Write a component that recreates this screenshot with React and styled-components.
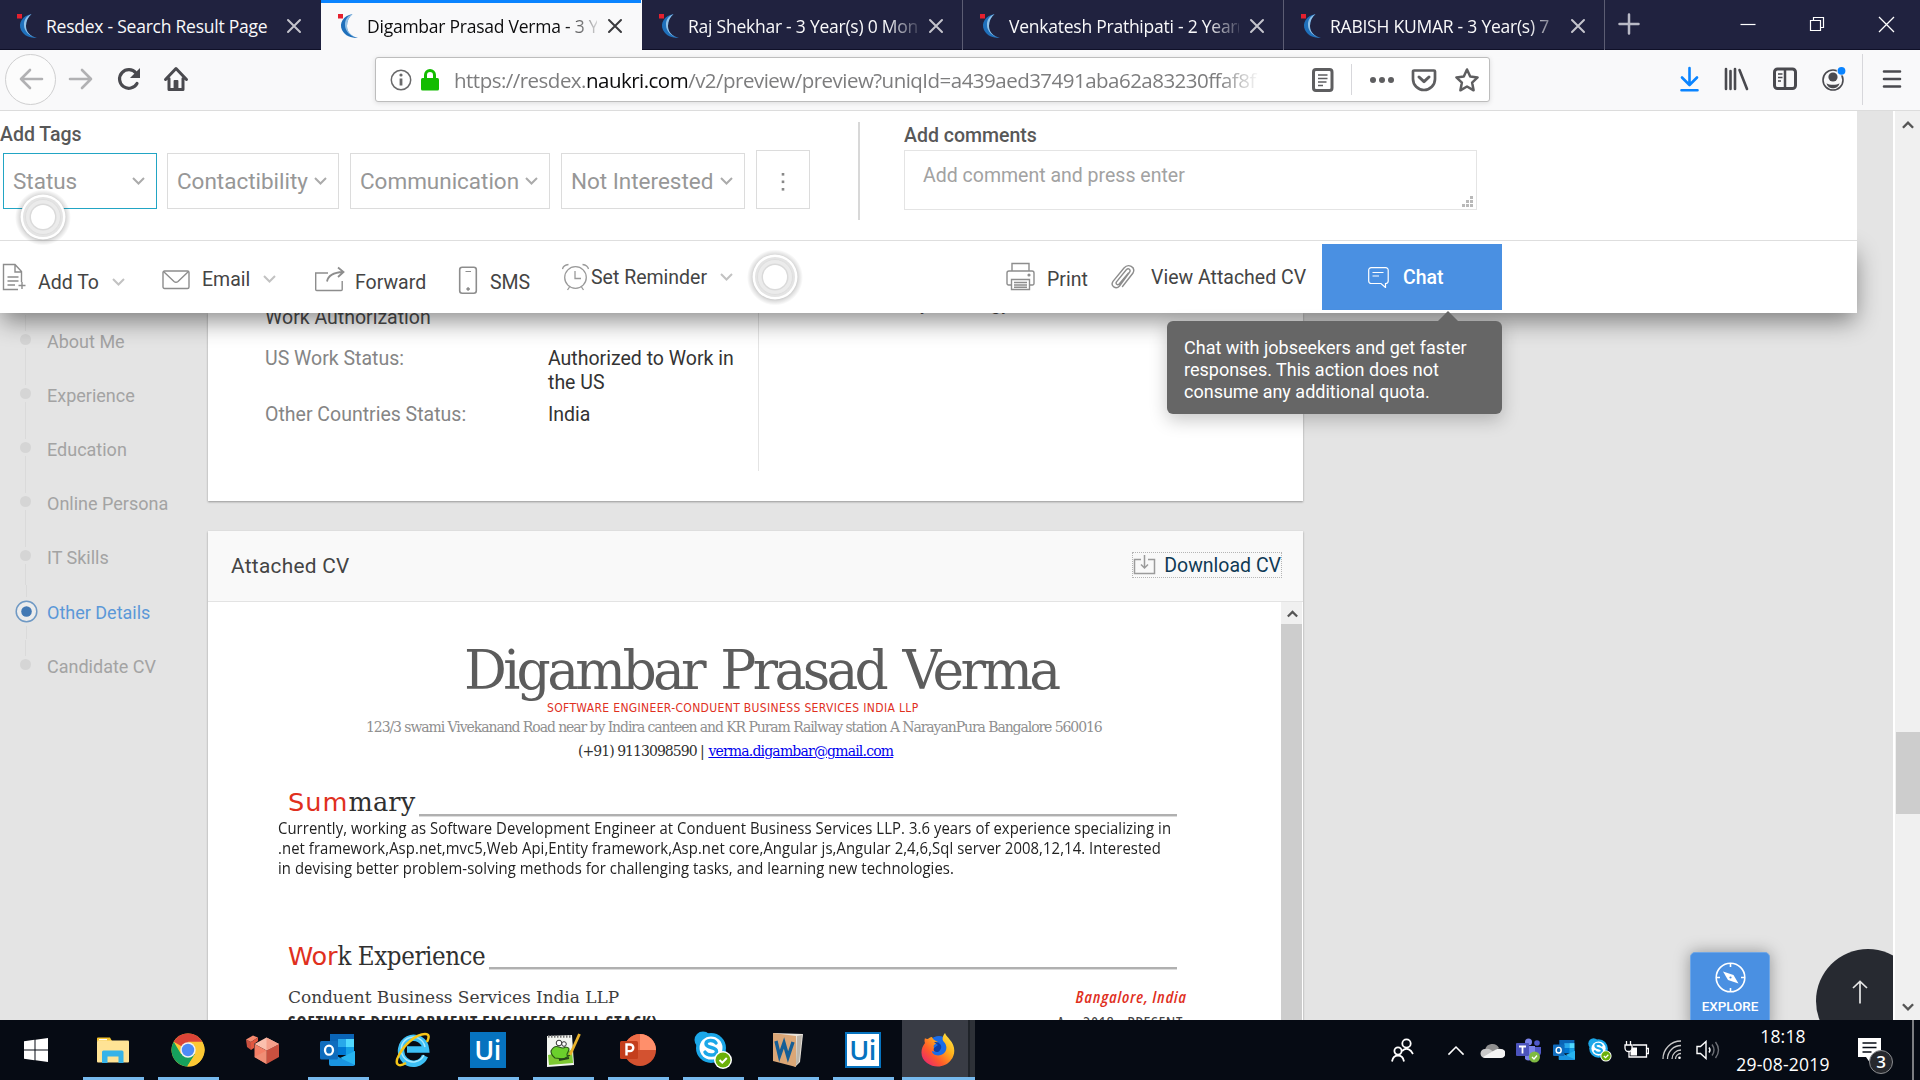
import React from "react";
import styled, { createGlobalStyle, css } from "styled-components";

const SEGOE = '"Open Sans", "Noto Sans", sans-serif';
const ROBOTO = 'Roboto, "Noto Sans", sans-serif';
const SERIF = '"DejaVu Serif", serif';
const SERIF_C = '"DejaVu Serif Condensed", "DejaVu Serif", serif';
const SANS = '"DejaVu Sans", sans-serif';
const SANS_C = '"DejaVu Sans Condensed", "DejaVu Sans", sans-serif';

const GlobalStyle = createGlobalStyle`
  *, *::before, *::after { box-sizing: border-box; }
  html, body { margin: 0; padding: 0; overflow: hidden; background: #e4e4e4; }
  svg { display: block; flex: none; }
`;

const Screen = styled.div`
  width: 1920px;
  height: 1080px;
  display: flex;
  flex-direction: column;
  overflow: hidden;
  font-family: ${ROBOTO};
`;

/* ---------- browser tabs ---------- */
const TabStrip = styled.div`
  flex: none;
  display: flex;
  height: 50px;
  background: #20223f;
  box-shadow: inset 0 -1px 0 #0f1028;
`;
const Tab = styled.div`
  display: flex;
  align-items: center;
  width: 321px;
  height: 50px;
  padding: 1px 17px 0 16px;
  border-right: 1px solid ${(p) => (p.$plain ? "transparent" : "#5c5d73")};
  font: 400 17.5px/24px ${SEGOE};
  letter-spacing: -0.24px;
  color: #f9f9fa;
  ${(p) =>
    p.$active &&
    css`
      background: #f9f9fa;
      border-right-color: #f9f9fa;
      box-shadow: inset 0 3px 0 #0a84ff;
      color: #0c0c0d;
    `}
`;
const TabTitle = styled.span`
  flex: none;
  width: 230px;
  margin-left: 8px;
  overflow: hidden;
  white-space: nowrap;
  ${(p) => p.$fade && css`mask-image: linear-gradient(to right, #000 ${p.$fade}px, transparent 236px);`}
`;
const CloseIcon = styled.svg`
  margin-left: 10px;
  stroke: ${(p) => (p.$active ? "#3a3a3d" : "#c4c4cc")};
`;
const NewTab = styled.div`
  display: flex;
  align-items: center;
  margin-left: 13px;
  height: 48px;
`;
const WindowControls = styled.div`
  display: flex;
  align-items: center;
  gap: 53px;
  height: 48px;
  margin-left: auto;
  padding-right: 25px;
`;

/* ---------- navigation bar ---------- */
const NavBar = styled.div`
  flex: none;
  display: flex;
  align-items: center;
  height: 61px;
  padding: 0 18px 2px 5px;
  background: #f9f9fa;
  border-bottom: 1px solid #dcdcdc;
`;
const BackButton = styled.div`
  display: flex;
  align-items: center;
  justify-content: center;
  width: 51px;
  height: 51px;
  border: 1px solid #cfcfd0;
  border-radius: 50%;
  background: #fcfcfc;
`;
const NavIcons = styled.div`
  display: flex;
  align-items: center;
  gap: 22px;
  width: 319px;
  padding-left: 12px;
`;
const UrlBox = styled.div`
  display: flex;
  align-items: center;
  width: 1115px;
  height: 45px;
  padding: 1px 9px 0 14px;
  background: #fff;
  border: 1px solid #bdbdbd;
  border-radius: 3px;
  box-shadow: 0 1px 5px rgba(0, 0, 0, 0.12);
`;
const Security = styled.div`
  display: flex;
  align-items: center;
  gap: 9px;
`;
const Url = styled.div`
  width: 806px;
  margin-left: 15px;
  overflow: hidden;
  white-space: nowrap;
  font: 400 20.5px/30px ${SEGOE};
  letter-spacing: -0.52px;
  color: #7d7d7e;
  mask-image: linear-gradient(to right, #000 765px, transparent 806px);
`;
const Host = styled.span`
  color: #0c0c0d;
`;
const UrlActions = styled.div`
  display: flex;
  align-items: center;
  gap: 17px;
  margin-left: auto;
`;
const VLine = styled.div`
  width: 1px;
  height: ${(p) => p.$h}px;
  background: #d7d7db;
`;
const ToolbarIcons = styled.div`
  display: flex;
  align-items: center;
  gap: 23px;
  margin-left: auto;
`;
const MenuGroup = styled.div`
  display: flex;
  align-items: center;
  gap: 19px;
  margin-left: -7px;
`;

/* ---------- page ---------- */
const Viewport = styled.div`
  flex: none;
  display: flex;
  height: 909px;
`;
const Page = styled.div`
  position: relative;
  display: flex;
  flex-direction: column;
  width: 1893px;
  height: 909px;
  overflow: hidden;
  background: #e4e4e4;
`;
const Panel = styled.div`
  position: relative;
  z-index: 2;
  flex: none;
  width: 1857px;
  height: 202px;
  background: #fff;
`;
const PanelTop = styled.div`
  position: relative;
  z-index: 1;
  display: flex;
  height: 130px;
  background: #fff;
  border-bottom: 1px solid #dedede;
`;
const TagBlock = styled.div`
  width: 858px;
  padding-top: 12px;
`;
const PanelLabel = styled.div`
  font: 500 19.5px/24px ${ROBOTO};
  color: #585858;
`;
const TagRow = styled.div`
  display: flex;
  align-items: flex-end;
  height: 59px;
  margin-top: 3px;
  padding-left: 3px;
`;
const TagBox = styled.div`
  display: flex;
  align-items: center;
  justify-content: space-between;
  width: ${(p) => p.$w}px;
  height: 56px;
  margin-right: ${(p) => p.$gap}px;
  padding: 0 11px 0 9px;
  border: 1px solid ${(p) => (p.$active ? "#22a5c4" : "#dcdcdc")};
  font: 400 22.5px/30px ${ROBOTO};
  letter-spacing: -0.02px;
  color: #979797;
`;
const MoreBox = styled.div`
  display: flex;
  align-items: center;
  justify-content: center;
  width: 54px;
  height: 59px;
  border: 1px solid #dcdcdc;
  padding-top: 4px;
`;
const PanelDivider = styled.div`
  width: 2px;
  height: 98px;
  margin-top: 11px;
  background: #d8d8d8;
`;
const CommentBlock = styled.div`
  margin-left: 44px;
  padding-top: 13px;
`;
const CommentBox = styled.div`
  display: flex;
  justify-content: space-between;
  align-items: flex-end;
  width: 573px;
  height: 60px;
  margin-top: 2px;
  padding: 0 3px 2px 18px;
  border: 1px solid #e4e4e4;
  font: 400 19.5px/24px ${ROBOTO};
  color: #a2a2a2;
`;
const Placeholder = styled.span`
  align-self: flex-start;
  margin-top: 13px;
`;
const ActionRow = styled.div`
  display: flex;
  align-items: flex-start;
  height: 72px;
  padding-left: 1px;
  box-shadow: 0 10px 24px -2px rgba(0, 0, 0, 0.45);
`;
const Action = styled.div`
  display: flex;
  align-items: flex-start;
  width: ${(p) => p.$w}px;
  flex: none;
  white-space: nowrap;
  font: 400 19.5px/24px ${ROBOTO};
  color: #444;
`;
const Slot = styled.div`
  width: ${(p) => p.$w}px;
  flex: none;
  padding-top: ${(p) => p.$top}px;
`;
const ActionText = styled.span`
  margin-top: ${(p) => p.$top}px;
`;
const Caret = styled.div`
  padding-top: ${(p) => p.$top}px;
  margin-left: ${(p) => p.$gap}px;
`;
const ChatButton = styled.div`
  display: flex;
  align-items: center;
  gap: 14px;
  width: 180px;
  height: 66px;
  margin-top: 3px;
  padding: 1px 0 0 46px;
  background: #4a90e2;
  color: #fff;
  font: 500 19.5px/24px ${ROBOTO};
`;
const Beacon = styled.div`
  position: absolute;
  z-index: 2;
  left: ${(p) => p.$x - 28}px;
  top: ${(p) => p.$y - 28}px;
`;
const Tooltip = styled.div`
  position: absolute;
  z-index: 3;
  left: 1167px;
  top: 210px;
  width: 335px;
  height: 93px;
  padding: 16px 17px;
  border-radius: 6px;
  background: #666;
  color: #fff;
  font: 400 18px/22px ${ROBOTO};
  white-space: pre;
  box-shadow: 0 6px 18px rgba(0, 0, 0, 0.22);
  &::before {
    content: "";
    position: absolute;
    left: 271px;
    top: -10px;
    border: 10px solid transparent;
    border-top: 0;
    border-bottom-color: #666;
  }
`;

const Body = styled.div`
  display: flex;
  height: 707px;
  overflow: hidden;
`;
const SideNav = styled.div`
  flex: none;
  width: 208px;
  padding-top: 2px;
`;
const SideItem = styled.div`
  display: flex;
  align-items: flex-start;
  height: 54px;
  margin-bottom: ${(p) => (p.$last ? 1 : 0)}px;
  font: 400 18px/24px ${ROBOTO};
  color: ${(p) => (p.$active ? "#5b98d8" : "#a3a3a3")};
`;
const SideMark = styled.div`
  flex: none;
  display: flex;
  flex-direction: column;
  align-items: center;
  width: 47px;
  height: 54px;
  padding-left: ${(p) => (p.$active ? 5 : 3)}px;
`;
const SideLine = styled.div`
  width: 1px;
  height: ${(p) => p.$h}px;
  margin-bottom: 3px;
  background: #dadada;
`;
const Dot = styled.div`
  width: 11px;
  height: 11px;
  border-radius: 50%;
  background: #d5d5d5;
`;
const SideTail = styled.div`
  width: 1px;
  flex: 1;
  margin-top: 3px;
  background: #dadada;
`;
const SideText = styled.span`
  margin-top: ${(p) => (p.$active ? 16 : 15)}px;
`;

const Main = styled.div`
  width: 1095px;
`;
const Card = styled.div`
  background: #fff;
  box-shadow: 0 1px 2px rgba(0, 0, 0, 0.35);
`;
const DetailsCard = styled(Card)`
  display: flex;
  height: 188px;
`;
const DetailsCol = styled.div`
  width: 551px;
  height: 158px;
  padding-left: 57px;
  border-right: 1px solid #e4e4e4;
  font: 400 19.5px/24px ${ROBOTO};
  color: #333;
`;
const DetailsTitle = styled.div`
  margin-top: -7px;
  color: #4c4c4c;
`;
const DetailsRow = styled.div`
  display: flex;
  margin-top: ${(p) => p.$top}px;
`;
const DetailsLabel = styled.div`
  width: 283px;
  color: #858585;
`;
const DetailsValue = styled.div`
  width: 200px;
`;
const OtherCol = styled.div`
  padding-left: 161px;
  font: 400 19.5px/24px ${ROBOTO};
  color: #4c4c4c;
`;
const OtherTitle = styled.div`
  display: flex;
  gap: 61px;
  margin-top: -21px;
`;
const CvCard = styled(Card)`
  height: 500px;
  margin-top: 30px;
`;
const CvHeader = styled.div`
  display: flex;
  align-items: center;
  justify-content: space-between;
  height: 71px;
  padding: 0 21px 0 23px;
  border-bottom: 1px solid #e3e3e3;
  background: #f9f9f9;
  font: 400 20.8px/24px ${ROBOTO};
  letter-spacing: 0.3px;
  color: #444;
`;
const Download = styled.div`
  display: flex;
  align-items: center;
  gap: 8px;
  height: 26px;
  margin-bottom: 2px;
  border: 1px dotted #b5b5b5;
  font: 400 19.5px/24px ${ROBOTO};
  letter-spacing: 0;
  color: #0f3a55;
`;
const DownloadText = styled.span`
  padding-top: 2px;
`;
const CvBody = styled.div`
  display: flex;
  height: 418px;
`;
const CvDoc = styled.div`
  width: 1073px;
  padding-top: 39px;
  white-space: nowrap;
  overflow: hidden;
`;
const CvName = styled.div`
  margin: 0 0 -1px 256px;
  font: 400 53.5px/60px ${SERIF};
  letter-spacing: -3.7px;
  word-spacing: 4px;
  color: #5c5c5c;
`;
const CvRole = styled.div`
  margin-left: 339px;
  font: 400 12px/16px ${SANS_C};
  letter-spacing: 0.35px;
  color: #e0301e;
`;
const CvAddress = styled.div`
  margin-left: 158px;
  font: 400 14px/22px ${SERIF};
  letter-spacing: -1.08px;
  color: #8f8f8f;
`;
const CvContact = styled.div`
  margin-left: 370px;
  font: 400 14px/26px ${SERIF};
  letter-spacing: -0.96px;
  color: #303030;
`;
const Mail = styled.span`
  margin-left: 1px;
  color: #0000ee;
  letter-spacing: -0.82px;
  text-decoration: underline;
`;
const CvHeading = styled.div`
  display: flex;
  height: 34px;
  margin: ${(p) => p.$top}px 0 0 80px;
  font: 400 25.6px/34px ${(p) => p.$font};
  letter-spacing: ${(p) => p.$ls}px;
  color: #303030;
`;
const Red = styled.span`
  font-family: ${(p) => p.$font};
  letter-spacing: ${(p) => p.$ls}px;
  color: #e0301e;
`;
const Rule = styled.div`
  width: ${(p) => p.$w}px;
  height: 3px;
  margin: ${(p) => p.$top}px 0 0 4px;
  background: #b0b0b0;
  border-bottom: 1px solid #dcdcdc;
`;
const CvPara = styled.div`
  margin: -1px 0 0 70px;
  font: 400 16.5px/20px ${SEGOE};
  transform: scaleX(0.9);
  transform-origin: 0 0;
  letter-spacing: 0.08px;
  color: #222;
`;
const CvRow = styled.div`
  display: flex;
  justify-content: space-between;
  width: ${(p) => p.$w}px;
  margin: ${(p) => p.$top}px 0 0 80px;
  height: 24px;
  line-height: 24px;
`;
const Company = styled.span`
  font: 400 17px/24px ${SERIF};
  letter-spacing: -0.05px;
  color: #3d3d3d;
`;
const Narrow = styled.span`
  font-family: ${SEGOE};
  font-size: 17px;
  font-stretch: 75%;
  font-weight: ${(p) => p.$weight};
  font-style: ${(p) => p.$style || "normal"};
  letter-spacing: ${(p) => p.$ls}px;
  color: ${(p) => p.$color};
`;
const InnerScroll = styled.div`
  width: 21px;
  margin-right: 1px;
  background: #cdcdcd;
`;
const InnerArrow = styled.div`
  display: flex;
  align-items: center;
  justify-content: center;
  height: 22px;
  padding: 2px 0 0 1px;
  background: #f0f0f0;
`;
const Explore = styled.div`
  position: absolute;
  left: 1690px;
  top: 841px;
  display: flex;
  flex-direction: column;
  align-items: center;
  gap: 3px;
  width: 80px;
  height: 80px;
  padding-top: 9px;
  border: 1px solid #6ea6e6;
  border-radius: 5px;
  background: #4a90e2;
  box-shadow: 0 0 16px rgba(0, 0, 0, 0.35);
  color: #fff;
  font: 500 13.5px/20px ${ROBOTO};
  letter-spacing: -0.1px;
`;
const ToTop = styled.div`
  position: absolute;
  left: 1816px;
  top: 838px;
  width: 104px;
  height: 104px;
  padding: 31px 0 0 36px;
  border-radius: 50%;
  background: #272a31;
`;
const Scrollbar = styled.div`
  display: flex;
  flex-direction: column;
  align-items: center;
  width: 27px;
  height: 909px;
  padding: 10px 0 9px;
  border-left: 2px solid #fff;
  background: #f0f0f0;
`;
const Thumb = styled.div`
  width: 24px;
  height: 82px;
  margin: 603px 0 auto;
  background: #cdcdcd;
`;

/* ---------- taskbar ---------- */
const Taskbar = styled.div`
  flex: none;
  display: flex;
  height: 60px;
  background: #060b14;
  color: #fff;
`;
const TaskButton = styled.div`
  display: flex;
  align-items: center;
  justify-content: center;
  width: 75px;
  height: 60px;
  ${(p) => p.$start && css`padding-right: 3px;`}
  ${(p) =>
    p.$open &&
    css`
      background: linear-gradient(#76b9ed, #76b9ed) 8px bottom / 61px 3px no-repeat;
    `}
  ${(p) =>
    p.$current &&
    css`
      width: 73px;
      margin-left: 2px;
      padding-right: 1px;
      background: linear-gradient(#76b9ed, #76b9ed) 0 bottom / 100% 3px no-repeat,
        linear-gradient(to right, #393c45 66px, #1f2329 66px, #1f2329 68px, #2d3137 68px);
    `}
`;
const Tile = styled.div`
  display: flex;
  align-items: center;
  justify-content: center;
  width: 36px;
  height: 36px;
  border: 2px solid #0673bf;
  background: ${(p) => (p.$light ? "#fff" : "#0673bf")};
  color: ${(p) => (p.$light ? "#0673bf" : "#fff")};
  font: 600 27px/32px ${SEGOE};
  letter-spacing: -0.5px;
`;
const Tray = styled.div`
  display: flex;
  align-items: center;
  height: 60px;
  margin-left: auto;
`;
const TrayIcon = styled.div`
  display: flex;
  align-items: center;
  justify-content: center;
  width: ${(p) => (p.$wide ? 72 : 36)}px;
`;
const Clock = styled.div`
  width: 104px;
  height: 60px;
  padding-top: 2px;
  margin-left: 5px;
  text-align: center;
  font: 400 17.5px/28px ${SEGOE};
  letter-spacing: 0.2px;
`;
const Notify = styled.div`
  width: 42px;
  padding-top: 12px;
  margin-left: 22px;
`;
const ShowDesktop = styled.div`
  width: 2px;
  height: 60px;
  margin: 0 6px 0 13px;
  background: #7b7d81;
`;

/* ---------- icons ---------- */
const Favicon = () => (
  <svg width="22" height="26" viewBox="0 0 22 26">
    <path d="M15.500 1C6 3 2 10 5 17c3 6 9 8 16 8-7-2-11-6-11-12 0-5 2-9 5.500-12z" fill="#1f70bb" />
    <path d="M15.500 1C10 3 7.500 8 8 12c0 6 5 11.500 13 13-7-2-11-6-11-12 0-5 2-9 5.500-12z" fill="#a6cfee" opacity=".85" />
    <rect x="1" y="1" width="5" height="4.500" fill="#e5202e" />
  </svg>
);
const Close = ({ active }) => (
  <CloseIcon $active={active} width="16" height="16" viewBox="0 0 16 16" strokeWidth="2" strokeLinecap="round">
    <path d="M2 2l12 12M14 2L2 14" />
  </CloseIcon>
);
const Chevron = ({ w = 13, h = 8, c = "#ababab", sw = 2, up }) => (
  <svg width={w} height={h} viewBox="0 0 13 8" fill="none" stroke={c} strokeWidth={sw}>
    <path d={up ? "M1 7l5.500-5.500L12 7" : "M1 1l5.500 5.500L12 1"} />
  </svg>
);
const Arrow = ({ c, flip }) => (
  <svg width="26" height="24" viewBox="0 0 26 24" fill="none" stroke={c} strokeWidth="2.600" strokeLinecap="round" strokeLinejoin="round">
    <path d={flip ? "M2 12h21M14 3l9 9-9 9" : "M24 12H3M12 3l-9 9 9 9"} />
  </svg>
);
const Reload = () => (
  <svg width="25" height="24" viewBox="0 0 25 24" fill="none" stroke="#4a4a4f" strokeWidth="3.200">
    <path d="M21 16.500A9.300 9.300 0 1 1 20 6" strokeLinecap="round" />
    <path d="M24 1v10H14z" fill="#4a4a4f" stroke="none" />
  </svg>
);
const Home = () => (
  <svg width="26" height="26" viewBox="0 0 26 26" fill="none" stroke="#4a4a4f" strokeWidth="3" strokeLinejoin="round" strokeLinecap="round">
    <path d="M2.500 13.500L13 2.500l10.500 11M6 12.500v11h14v-11" />
    <path d="M11.500 22v-7h3v7z" fill="#4a4a4f" strokeWidth="1.800" />
  </svg>
);
const Info = () => (
  <svg width="22" height="22" viewBox="0 0 22 22" fill="none" stroke="#6a6a6b">
    <circle cx="11" cy="11" r="9.700" strokeWidth="1.500" />
    <path d="M11 9.500v7" strokeWidth="2.800" />
    <circle cx="11" cy="6" r="1.600" fill="#6a6a6b" stroke="none" />
  </svg>
);
const Lock = () => (
  <svg width="18" height="22" viewBox="0 0 18 22">
    <path d="M4.500 10V6a4.500 4.500 0 0 1 9 0v4" fill="none" stroke="#12bc00" strokeWidth="3" />
    <rect y="9" width="18" height="12.500" rx="1.500" fill="#12bc00" />
  </svg>
);
const Reader = () => (
  <svg width="22" height="24" viewBox="0 0 22 24" fill="none" stroke="#5e5e60">
    <rect x="1.500" y="1.500" width="18.500" height="21" rx="2.500" strokeWidth="3" />
    <path d="M6 7h9.500M6 10.500h9.500M6 14h8.500M6 17.500h5" strokeWidth="1.600" />
  </svg>
);
const Dots = () => (
  <svg width="25" height="8" viewBox="0 0 25 8" fill="#5e5e60">
    <circle cx="4" cy="4" r="3" /><circle cx="13" cy="4" r="3" /><circle cx="22" cy="4" r="3" />
  </svg>
);
const Pocket = () => (
  <svg width="26" height="24" viewBox="0 0 26 24" fill="none" stroke="#5e5e60" strokeWidth="2.700" strokeLinecap="round" strokeLinejoin="round">
    <path d="M3 2.500h20a1 1 0 0 1 1 1V11a11 11 0 0 1-22 0V3.500a1 1 0 0 1 1-1z" />
    <path d="M8 9l5 4.700L18 9" strokeWidth="3" />
  </svg>
);
const Star = () => (
  <svg width="26" height="26" viewBox="0 0 26 26" fill="none" stroke="#5e5e60" strokeWidth="2.500" strokeLinejoin="round">
    <path d="M13 2.500l3.200 7 7.400.9-5.500 5.200 1.500 7.700L13 19.500l-6.600 3.800 1.500-7.700-5.500-5.200 7.400-.9z" />
  </svg>
);
const DownloadArrow = () => (
  <svg width="20" height="26" viewBox="0 0 20 26" fill="none" stroke="#0a84ff" strokeWidth="2.600" strokeLinecap="round" strokeLinejoin="round">
    <path d="M9.500 2v16M2 11.500L9.500 19l7.500-7.500M1.500 24.200h16" />
  </svg>
);
const Library = () => (
  <svg width="26" height="24" viewBox="0 0 26 24" fill="none" stroke="#4a4a4f" strokeWidth="2.600" strokeLinecap="round">
    <path d="M3 2v20M7.500 4v18M12 2v20M16.500 3l7.500 19" />
  </svg>
);
const SidebarIcon = () => (
  <svg width="26" height="24" viewBox="0 0 26 24" fill="none" stroke="#4a4a4f">
    <rect x="2.500" y="2" width="21" height="19.500" rx="3" strokeWidth="3" />
    <path d="M13 2v20" strokeWidth="2.500" /><path d="M6 7h4.500M6 10.500h4.500M6 14h3" strokeWidth="1.500" />
  </svg>
);
const Account = () => (
  <svg width="25" height="26" viewBox="0 0 25 26" fill="#4a4a4f">
    <circle cx="12" cy="14" r="10" fill="none" stroke="#4a4a4f" strokeWidth="1.600" />
    <circle cx="12" cy="11" r="4.600" /><path d="M5.500 17.200c3 2 10 2 13 0-1 4-4 5-6.500 5s-5.500-1-6.500-5z" />
    <circle cx="20.500" cy="4.800" r="4.800" fill="#f9f9fa" /><circle cx="20.500" cy="4.800" r="3.900" fill="#0a84ff" />
  </svg>
);
const Menu = () => (
  <svg width="20" height="20" viewBox="0 0 20 20" stroke="#4a4a4f" strokeWidth="2.600" strokeLinecap="round">
    <path d="M2 2.500h16M2 10h16M2 17.500h16" />
  </svg>
);
const G = "#8d8d8d";
const AddDoc = () => (
  <svg width="26" height="29" viewBox="0 0 26 29" fill="none" stroke={G} strokeWidth="1.400">
    <path d="M17 26.500H2.500V1.500H14l6.500 7V19M14 1.500v7.500h6.500M6.500 14h11M6.500 18h11M6.500 22H14M21 19v7M17.500 22.500h7" />
  </svg>
);
const Envelope = () => (
  <svg width="28" height="20" viewBox="0 0 28 20" fill="none" stroke={G} strokeWidth="1.400">
    <rect x="1" y="1" width="26" height="17.500" rx="1.500" /><path d="M1.500 1.500l10.500 10q2 1.700 4 0l10.500-10" />
  </svg>
);
const Share = () => (
  <svg width="32" height="26" viewBox="0 0 32 26" fill="none" stroke={G} strokeWidth="1.400">
    <path d="M14 7H1.700v16.500a1 1 0 0 0 1 1h24.500a1 1 0 0 0 1-1V15" />
    <path d="M13 15.500C14 10 19 6.500 29 6M24 1.500L29.500 6 24 11" strokeWidth="1.800" />
  </svg>
);
const Phone = () => (
  <svg width="20" height="29" viewBox="0 0 20 29" fill="none" stroke={G}>
    <rect x="1.700" y="1.200" width="16.600" height="26" rx="2.500" strokeWidth="1.600" />
    <path d="M7.500 5.500H13" /><circle cx="10.100" cy="23" r="1.300" fill={G} />
  </svg>
);
const Alarm = () => (
  <svg width="28" height="28" viewBox="0 0 28 28" fill="none" stroke="#9a9a9a" strokeWidth="1.300">
    <circle cx="13.500" cy="14.500" r="10.800" /><path d="M13 8v7.500h6M.5 6c.5-2.500 2.500-4 6-4.500M26.500 6c-.5-2.500-2.500-4-6-4.500M7.500 24l-2 3M19.500 24l2 3" />
  </svg>
);
const Printer = () => (
  <svg width="29" height="29" viewBox="0 0 29 29" fill="none" stroke={G} strokeWidth="1.400">
    <path d="M6 8.500V1.500h17v7M6 23H2.500a1.500 1.500 0 0 1-1.500-1.500V11a2 2 0 0 1 2-2h23a2 2 0 0 1 2 2v10.500a1.500 1.500 0 0 1-1.500 1.500H23" />
    <path d="M5.500 17.500h18v10h-18zM8 20.500h13M8 23h13M8 25.200h13" /><circle cx="23" cy="13" r=".9" fill={G} />
  </svg>
);
const Clip = () => (
  <svg width="27" height="27" viewBox="0 0 27 27" fill="none" stroke={G} strokeWidth="1.400" strokeLinecap="round">
    <path d="M18.500 9L9.200 20c-1.700 1.600-4-.3-2.700-2.200l10-12.300c2-2 4.700.3 3 2.800L9.500 22C6 26 0 22 3 17.300L14 4c4.300-5 12-1 9 5L12.500 22.500" />
  </svg>
);
const ChatIcon = () => (
  <svg width="21" height="21" viewBox="0 0 21 21" fill="none" stroke="#fff" strokeWidth="1.200">
    <path d="M17.500 20.500l-4.500-4H3.200A2.500 2.500 0 0 1 .7 14V3.200A2.500 2.500 0 0 1 3.200.7h14.500a2.500 2.500 0 0 1 2.500 2.500V14c0 1.500-1 2.500-2.700 2.500zM4.500 5.500h11M4.500 9h6.500" />
  </svg>
);
const DownloadBox = () => (
  <svg width="23" height="21" viewBox="0 0 23 21" fill="none" stroke="#9b9b9b" strokeWidth="1.500">
    <path d="M8 4.500H1.500v14h20v-14H15M11.500 0v12.500M8 9.500l3.500 3.500L15 9.500" />
  </svg>
);
const Rings = () => (
  <svg width="56" height="56" viewBox="0 0 56 56">
    <defs><radialGradient id="halo"><stop offset=".7" stopColor="#000" stopOpacity=".3" /><stop offset=".85" stopColor="#000" stopOpacity=".12" /><stop offset="1" stopColor="#000" stopOpacity="0" /></radialGradient></defs>
    <circle cx="28" cy="28.500" r="28" fill="url(#halo)" />
    <circle cx="28" cy="28" r="22.500" fill="#fff" />
    <circle cx="28" cy="28" r="20" fill="#e4e4e4" />
    <circle cx="28" cy="28" r="17.500" fill="#ebebeb" stroke="#dcdcdc" strokeWidth=".8" />
    <circle cx="28" cy="28" r="13.500" fill="#dadada" />
    <circle cx="28" cy="28" r="12" fill="#fff" />
  </svg>
);
const Target = () => (
  <svg width="23" height="23" viewBox="0 0 23 23">
    <circle cx="11.500" cy="11.500" r="10.300" fill="#ececec" stroke="#6f99c4" strokeWidth="1.500" />
    <circle cx="11.500" cy="11.500" r="5.300" fill="#4379b4" />
  </svg>
);
const Compass = () => (
  <svg width="31" height="31" viewBox="0 0 31 31" fill="none" stroke="#fff" strokeWidth="1.600">
    <circle cx="15.500" cy="15.500" r="14.300" /><path d="M15.500 1v4M15.500 26v4M1 15.500h4M26 15.500h4" />
    <path d="M8 9.500l10.500 3.500 5 8.500-10.500-3.500z" fill="#fff" stroke="none" /><circle cx="15.500" cy="15.500" r="1.100" fill="#4a90e2" stroke="none" />
  </svg>
);

const Windows = () => (
  <svg width="24" height="24" viewBox="0 0 24 24" fill="#fff"><path d="M0 3.200l10.500-1.400v9.700H0zM11.500 1.700L24 0v11.500H11.500zM0 12.500h10.500v9.700L0 20.800zM11.500 12.500H24V24l-12.500-1.700z" /></svg>
);
const Folder = () => (
  <svg width="32" height="27" viewBox="0 0 32 27">
    <path d="M0 1.500A1 1 0 0 1 1 .5h12l2 3.500H0z" fill="#f7c52f" /><rect y="3.500" width="32" height="22" rx="1" fill="#ffe395" />
    <rect x="2" y="2" width="8" height="1.200" fill="#fff" />
    <path d="M5 26V15a1.500 1.500 0 0 1 1.500-1.500h18.500A1.500 1.500 0 0 1 26.500 15v11h-5v-6.500h-11V26z" fill="#37b3e8" />
  </svg>
);
const Chrome = () => (
  <svg width="34" height="34" viewBox="0 0 34 34">
    <circle cx="17" cy="17" r="16.500" fill="#fcc934" />
    <path d="M17 17L2.700 8.800A16.500 16.500 0 0 1 31.300 8.800z" fill="#db4437" />
    <path d="M2.700 8.800A16.500 16.500 0 0 0 16.200 33.500L24 21 10 21z" fill="#16a05d" /><path d="M24.500 20.500L16.200 33.500A16.500 16.500 0 0 0 31.300 8.800H17z" fill="#fcc934" />
    <circle cx="17" cy="17" r="7.700" fill="#f1f1f1" /><circle cx="17" cy="17" r="6.200" fill="#4c8bf5" />
  </svg>
);
const Cubes = () => (
  <svg width="33" height="30" viewBox="0 0 33 30">
    <path d="M0 4.500L5 7v8L1 12z" fill="#c9503f" /><path d="M0 4.500L7 .5l5 2L5 7z" fill="#f58a70" /><path d="M5 7l7-4.500V6L8 9v4l-3 2z" fill="#e2573f" />
    <path d="M20.500 2.500L33 9l-12.500 6.500L8.500 9z" fill="#fbc0ae" /><path d="M8.500 9l12 6.500v13.500L8.500 22z" fill="#f37f66" /><path d="M33 9l-12.500 6.500v13.500L33 22z" fill="#c9503f" /><path d="M20.500 2.500v13L33 9z" fill="#f5a08b" /><path d="M8.500 22l12-6.500V29z" fill="#f08e75" />
  </svg>
);
const Outlook = ({ s = 1 }) => (
  <svg width={36 * s} height={33 * s} viewBox="0 0 36 33">
    <rect x="10" y="0" width="24" height="21" fill="#0a64b5" /><rect x="18" y="5" width="8" height="8" fill="#28a8ea" /><rect x="26" y="5" width="8" height="8" fill="#50d9ff" /><rect x="18" y="13" width="8" height="8" fill="#0078d4" /><rect x="26" y="13" width="8" height="8" fill="#14a0e6" />
    <path d="M9 17l13 8 13-8v13a2 2 0 0 1-2 2H11a2 2 0 0 1-2-2z" fill="#1a94e0" /><path d="M35 17v14L20 24z" fill="#28b4f0" />
    <rect y="7" width="18" height="18.500" rx="1.500" fill="#0f6cbd" /><ellipse cx="9" cy="16.200" rx="4" ry="4.500" fill="none" stroke="#fff" strokeWidth="2.300" />
  </svg>
);
const Explorer = () => (
  <svg width="36" height="36" viewBox="0 0 36 36" fill="none">
    <path d="M30 24A12.500 13 0 1 1 31 17.500H12" stroke="#3dc0f5" strokeWidth="6.500" /><path d="M29 23A12 12.500 0 1 1 30 15" stroke="#a8e9ff" strokeWidth="1.500" />
    <path d="M11 31C3 36-1 32 4 23 9 13 21 2 30 2c5 0 4 4 2 8" stroke="#f5c518" strokeWidth="2.500" />
  </svg>
);
const Notepad = () => (
  <svg width="36" height="36" viewBox="0 0 36 36">
    <path d="M2 4l25-1 2 30-27 2z" fill="#f2f5f0" /><path d="M3 23l24-5 1 13-24 2z" fill="#7dc832" /><path d="M6 19q3-6 8-4t6 0q6 0 3 5t2 3l-6 4-9-1q-4-3-4-7z" fill="#6bd02c" stroke="#2a5715" strokeWidth="1.200" />
    <circle cx="14" cy="11" r="2.800" fill="#fff" stroke="#333" /><circle cx="19" cy="12" r="2.300" fill="#fff" stroke="#333" /><path d="M3 4.500h24" stroke="#777" strokeWidth="2.500" strokeDasharray="1.500 1.500" /><path d="M25 23L34.500 2" stroke="#e8b12a" strokeWidth="2.800" /><path d="M14 28l10-2" stroke="#24431a" strokeWidth="2" />
  </svg>
);
const PowerPoint = () => (
  <svg width="36" height="34" viewBox="0 0 36 34">
    <circle cx="20" cy="17" r="16" fill="#d35230" /><path d="M20 1a16 16 0 0 1 16 16H20z" fill="#ff8f6b" /><path d="M20 1A16 16 0 0 0 4 17h16z" fill="#ed6c47" />
    <rect y="8" width="18" height="18" rx="1.500" fill="#c43e1c" /><path d="M6.500 22.500v-11H10a3.300 3.300 0 0 1 0 6.600H6.500" fill="none" stroke="#fff" strokeWidth="2.400" />
  </svg>
);
const Skype = ({ s = 1 }) => (
  <svg width={38 * s} height={38 * s} viewBox="0 0 38 38">
    <circle cx="17" cy="17" r="15" fill="#1ba7e8" /><circle cx="9" cy="9" r="8.500" fill="#1ba7e8" /><circle cx="24" cy="24" r="8.500" fill="#1ba7e8" />
    <circle cx="17" cy="17" r="11.500" fill="#fff" /><path d="M22 12c-2-3.500-10-3.500-10 .8 0 5 10.500 2.500 10.500 7.600 0 4.500-9 5-11.500.8" fill="none" stroke="#1ba7e8" strokeWidth="3.500" strokeLinecap="round" />
    <circle cx="29" cy="29" r="9" fill="#fff" /><circle cx="29" cy="29" r="7.500" fill="#6bb00a" /><path d="M25.500 29l2.800 2.700 4.500-4.700" fill="none" stroke="#fff" strokeWidth="2" />
  </svg>
);
const Book = () => (
  <svg width="30" height="36" viewBox="0 0 30 36">
    <path d="M0 1l30 1-3 28-5 5z" fill="#e9e4dc" /><path d="M24 4l5-1-3 27-3 3z" fill="#bdb6ab" /><path d="M0 1l23 3v31L0 29z" fill="#dba777" /><path d="M3 9l3.500 15L11 11l4 14 5-15" fill="none" stroke="#155e96" strokeWidth="3.400" />
  </svg>
);
const Firefox = () => (
  <svg width="34" height="34" viewBox="0 0 34 34">
    <defs><linearGradient id="fx" x1="1" y1="0" x2="0" y2="1"><stop offset="0" stopColor="#fff44f" /><stop offset=".35" stopColor="#ffb21c" /><stop offset=".65" stopColor="#ff5a2a" /><stop offset="1" stopColor="#e31587" /></linearGradient></defs>
    <circle cx="18" cy="15" r="12" fill="#1a6ce8" />
    <path d="M4 5q-1 3 0 5C-1 16-1 25 6 30c8 6 19 4 24-3 5-6 4-15-1-20-2-3-4-4-5-7-3 4-3 7-1 9 4 4 3 11-3 13-5 1.500-9-1-9-4 2 1 5 0 6-2-4 0-5-2-4-4l4-3c-2-1-5-2-6-5-2 0-3 1-4 2Q4 6 4 5z" fill="url(#fx)" />
    <path d="M13 9l4 3-4 3c-1 2 0 4 4 4 2-1 5-5 2-8-2-2-4-2-6-2z" fill="#0d3fa8" />
  </svg>
);
const People = () => (
  <svg width="23" height="25" viewBox="0 0 23 25" fill="none" stroke="#fff" strokeWidth="1.800">
    <circle cx="15.500" cy="5.500" r="4.200" /><path d="M11 13q4.500-4.500 9 0l2 3" /><circle cx="7" cy="13" r="3.600" /><path d="M1 23.500q1-6 6-6t6 6" />
  </svg>
);
const Cloud = () => (
  <svg width="25" height="17" viewBox="0 0 25 17"><path d="M5 8a7.500 7.500 0 0 1 14-2l-8 5z" fill="#8f8f8f" /><path d="M5 16a4.500 4.500 0 0 1 0-9q3-1 6 1l10 8z" fill="#c9c9c9" /><path d="M3 15l12-7q3-2 6-1a4.500 4.500 0 0 1 0 9H5z" fill="#f4f4f4" /></svg>
);
const Teams = () => (
  <svg width="25" height="25" viewBox="0 0 25 25">
    <circle cx="12.500" cy="4" r="3.500" fill="#7b83eb" /><circle cx="21" cy="5" r="2.800" fill="#5059c9" /><path d="M9 8h10v9a6 6 0 0 1-10 4z" fill="#7b83eb" /><path d="M19 9h6v6a4 4 0 0 1-6 3z" fill="#5059c9" />
    <rect y="5" width="13" height="13" rx="1" fill="#4b53bc" /><path d="M3 8.500h7M6.500 8.500v7" stroke="#fff" strokeWidth="1.800" /><circle cx="18.500" cy="19" r="5.500" fill="#7fba42" /><path d="M16 19l2 2 3-3.500" fill="none" stroke="#fff" strokeWidth="1.300" />
  </svg>
);
const Battery = () => (
  <svg width="25" height="18" viewBox="0 0 25 18" fill="none" stroke="#fff" strokeWidth="1.300">
    <path d="M9 4h13.500v12H5v-5M22.500 7.500h2v5h-2" /><rect x="6.500" y="6.500" width="6.500" height="8" fill="#fff" stroke="none" /><path d="M2.500 0v4M6.500 0v4M1 4h7v3a3.500 3.500 0 0 1-7 0z" fill="#060b14" />
  </svg>
);
const Wifi = () => (
  <svg width="20" height="20" viewBox="0 0 20 20" fill="none" stroke="#c8c8c8" strokeWidth="1.300">
    <path d="M1 19A18 18 0 0 1 19 1M5.500 19A13.500 13.500 0 0 1 19 5.500M10 19a9 9 0 0 1 9-9" /><path d="M13.500 19a5.500 5.500 0 0 1 5.500-5.500" /><circle cx="17.500" cy="17.700" r="1.300" fill="#fff" stroke="none" />
  </svg>
);
const Volume = () => (
  <svg width="24" height="20" viewBox="0 0 24 20" fill="none" stroke="#fff" strokeWidth="1.400">
    <path d="M1 6.500h3.500L10 1.500v17l-5.500-5H1z" /><path d="M13 7.500q2 2.500 0 5" /><path d="M16 4.500q4 5.500 0 11M19.500 2q6 8 0 16" stroke="#6c6f75" />
  </svg>
);
const NotifyIcon = () => (
  <svg width="38" height="38" viewBox="0 0 38 38">
    <path d="M1 1h23v19H16l-3.500 5-3.500-5H1z" fill="#fff" /><path d="M5.500 6h14M5.500 10.500h14M5.500 15h9" stroke="#060b14" strokeWidth="1.400" />
    <circle cx="24" cy="25" r="11.500" fill="#26282d" stroke="#8b8d90" />
    <text x="24" y="31" textAnchor="middle" fontFamily="Open Sans" fontWeight="600" fontSize="17" fill="#fff">3</text>
  </svg>
);

const TABS = [
  { title: "Resdex - Search Result Page", plain: true },
  { title: "Digambar Prasad Verma - 3 Y", active: true, fade: 198 },
  { title: "Raj Shekhar - 3 Year(s) 0 Mon", fade: 198 },
  { title: "Venkatesh Prathipati - 2 Year(", fade: 198 },
  { title: "RABISH KUMAR - 3 Year(s) 7", fade: 198 },
];
const TAGS = [
  { label: "Status", w: 154, gap: 10, active: true },
  { label: "Contactibility", w: 172, gap: 11 },
  { label: "Communication", w: 200, gap: 11 },
  { label: "Not Interested", w: 184, gap: 11 },
];
const ACTIONS = [
  { label: "Add To", w: 161, icon: <AddDoc />, iw: 37, it: 22, tt: 30, caret: 13, ct: 37 },
  { label: "Email", w: 152, icon: <Envelope />, iw: 40, it: 29, tt: 27, caret: 13, ct: 34 },
  { label: "Forward", w: 144, icon: <Share />, iw: 41, it: 25, tt: 30 },
  { label: "SMS", w: 104, icon: <Phone />, iw: 32, it: 25, tt: 30 },
  { label: "Set Reminder", w: 444, icon: <Alarm />, iw: 29, it: 22, tt: 25, caret: 13, ct: 32 },
  { label: "Print", w: 104, icon: <Printer />, iw: 41, it: 21, tt: 27 },
  { label: "View Attached CV", w: 212, icon: <Clip />, iw: 41, it: 23, tt: 25 },
];
const SECTIONS = ["About Me", "Experience", "Education", "Online Persona", "IT Skills", "Other Details", "Candidate CV"];
const PINNED = [
  { icon: <Folder />, open: true },
  { icon: <Chrome />, open: true },
  { icon: <Cubes /> },
  { icon: <Outlook />, open: true },
  { icon: <Explorer /> },
  { icon: <Tile>Ui</Tile>, open: true },
  { icon: <Notepad />, open: true },
  { icon: <PowerPoint />, open: true },
  { icon: <Skype />, open: true },
  { icon: <Book />, open: true },
  { icon: <Tile $light>Ui</Tile>, open: true },
];
const TRAY = [
  <Chevron up c="#fff" w={18} h={11} sw={1.1} />,
  <Cloud />,
  <Teams />,
  <Outlook s={0.63} />,
  <Skype s={0.62} />,
  <Battery />,
  <Wifi />,
  <Volume />,
];

export default function App() {
  return (
    <Screen>
      <GlobalStyle />
      <TabStrip>
        {TABS.map((t) => (
          <Tab key={t.title} $active={t.active} $plain={t.plain}>
            <Favicon />
            <TabTitle $fade={t.fade}>{t.title}</TabTitle>
            <Close active={t.active} />
          </Tab>
        ))}
        <NewTab>
          <svg width="22" height="22" viewBox="0 0 22 22" stroke="#b9bac6" strokeWidth="2.500" strokeLinecap="round"><path d="M11 1.500v19M1.500 11h19" /></svg>
        </NewTab>
        <WindowControls>
          <svg width="16" height="16" viewBox="0 0 16 16" stroke="#fff" strokeWidth="1.200"><path d="M0.500 8.500h15" /></svg>
          <svg width="16" height="16" viewBox="0 0 16 16" stroke="#fff" strokeWidth="1.200" fill="none"><path d="M1.500 4.500h10v10h-10zM4.500 4.500v-3h10v10h-3" /></svg>
          <svg width="17" height="17" viewBox="0 0 17 17" stroke="#fff" strokeWidth="1.300"><path d="M1 1l15 15M16 1L1 16" /></svg>
        </WindowControls>
      </TabStrip>

      <NavBar>
        <BackButton><Arrow c="#b1b1b3" /></BackButton>
        <NavIcons><Arrow c="#b1b1b3" flip /><Reload /><Home /></NavIcons>
        <UrlBox>
          <Security><Info /><Lock /></Security>
          <Url>https://resdex.<Host>naukri.com</Host>/v2/preview/preview?uniqId=a439aed37491aba62a83230ffaf8f</Url>
          <UrlActions>
            <Reader /><VLine $h={31} /><Dots /><Pocket /><Star />
          </UrlActions>
        </UrlBox>
        <ToolbarIcons>
          <DownloadArrow /><Library /><SidebarIcon /><Account />
          <MenuGroup><VLine $h={51} /><Menu /></MenuGroup>
        </ToolbarIcons>
      </NavBar>

      <Viewport>
        <Page>
          <Panel>
            <PanelTop>
              <TagBlock>
                <PanelLabel>Add Tags</PanelLabel>
                <TagRow>
                  {TAGS.map((t) => (
                    <TagBox key={t.label} $w={t.w} $gap={t.gap} $active={t.active}>{t.label}<Chevron /></TagBox>
                  ))}
                  <MoreBox>
                    <svg width="4" height="18" viewBox="0 0 4 18" fill="#888"><rect x=".7" width="2.600" height="2.600" /><rect x=".7" y="7.500" width="2.600" height="2.600" /><rect x=".7" y="15" width="2.600" height="2.600" /></svg>
                  </MoreBox>
                </TagRow>
              </TagBlock>
              <PanelDivider />
              <CommentBlock>
                <PanelLabel>Add comments</PanelLabel>
                <CommentBox>
                  <Placeholder>Add comment and press enter</Placeholder>
                  <svg width="11" height="11" viewBox="0 0 11 11" fill="#b9b9b9"><path d="M8 0h3v3H8zM8 4h3v3H8zM4 4h3v3H4zM0 8h3v3H0zM4 8h3v3H4zM8 8h3v3H8z" /></svg>
                </CommentBox>
              </CommentBlock>
            </PanelTop>
            <ActionRow>
              {ACTIONS.map((a) => (
                <Action key={a.label} $w={a.w}>
                  <Slot $w={a.iw} $top={a.it}>{a.icon}</Slot>
                  <ActionText $top={a.tt}>{a.label}</ActionText>
                  {a.caret && <Caret $gap={a.caret} $top={a.ct}><Chevron c="#c2c2c2" /></Caret>}
                </Action>
              ))}
              <ChatButton><ChatIcon />Chat</ChatButton>
            </ActionRow>
            <Beacon $x={43} $y={106}><Rings /></Beacon>
            <Beacon $x={775} $y={166}><Rings /></Beacon>
          </Panel>
          <Tooltip>{"Chat with jobseekers and get faster\nresponses. This action does not\nconsume any additional quota."}</Tooltip>

          <Body>
            <SideNav>
              {SECTIONS.map((s, i) => {
                const active = s === "Other Details";
                return (
                  <SideItem key={s} $active={active} $last={active}>
                    <SideMark $active={active}>
                      <SideLine $h={active ? 12 : 16} />
                      {active ? <Target /> : <Dot />}
                      {i < SECTIONS.length - 1 && <SideTail />}
                    </SideMark>
                    <SideText $active={active}>{s}</SideText>
                  </SideItem>
                );
              })}
            </SideNav>
            <Main>
              <DetailsCard>
                <DetailsCol>
                  <DetailsTitle>Work Authorization</DetailsTitle>
                  <DetailsRow $top={17}>
                    <DetailsLabel>US Work Status:</DetailsLabel>
                    <DetailsValue>Authorized to Work in<br />the US</DetailsValue>
                  </DetailsRow>
                  <DetailsRow $top={8}>
                    <DetailsLabel>Other Countries Status:</DetailsLabel>
                    <DetailsValue>India</DetailsValue>
                  </DetailsRow>
                </DetailsCol>
                <OtherCol>
                  <OtherTitle><span>y</span><span>gy</span></OtherTitle>
                </OtherCol>
              </DetailsCard>
              <CvCard>
                <CvHeader>
                  <span>Attached CV</span>
                  <Download><DownloadBox /><DownloadText>Download CV</DownloadText></Download>
                </CvHeader>
                <CvBody>
                  <CvDoc>
                    <CvName>Digambar Prasad Verma</CvName>
                    <CvRole>SOFTWARE ENGINEER-CONDUENT BUSINESS SERVICES INDIA LLP</CvRole>
                    <CvAddress>123/3 swami Vivekanand Road near by Indira canteen and KR Puram Railway station A NarayanPura Bangalore 560016</CvAddress>
                    <CvContact>(+91) 9113098590 | <Mail>verma.digambar@gmail.com</Mail></CvContact>
                    <CvHeading $top={21} $font={SERIF} $ls={0.2}>
                      <Red $font={SANS} $ls={1}>Sum</Red>mary<Rule $w={758} $top={29} />
                    </CvHeading>
                    <CvPara>
                      Currently, working as Software Development Engineer at Conduent Business Services LLP. 3.6 years of experience specializing in<br />
                      .net framework,Asp.net,mvc5,Web Api,Entity framework,Asp.net core,Angular js,Angular 2,4,6,Sql server 2008,12,14. Interested<br />
                      in devising better problem-solving methods for challenging tasks, and learning new technologies.
                    </CvPara>
                    <CvHeading $top={61} $font={SERIF_C} $ls={-0.4}>
                      <Red $font={SANS} $ls={-0.2}>Wor</Red>k Experience<Rule $w={688} $top={28} />
                    </CvHeading>
                    <CvRow $top={12} $w={899}>
                      <Company>Conduent Business Services India LLP</Company>
                      <Narrow $weight={600} $style="italic" $ls={1} $color="#e0301e">Bangalore, India</Narrow>
                    </CvRow>
                    <CvRow $top={2} $w={895}>
                      <Narrow $weight={700} $ls={1.05} $color="#303030">SOFTWARE DEVELOPMENT ENGINEER (FULL STACK)</Narrow>
                      <Narrow $weight={500} $ls={0.6} $color="#444">Apr 2018 - PRESENT</Narrow>
                    </CvRow>
                  </CvDoc>
                  <InnerScroll>
                    <InnerArrow><Chevron up c="#555" w={11} sw={2.6} /></InnerArrow>
                  </InnerScroll>
                </CvBody>
              </CvCard>
            </Main>
          </Body>
          <Explore><Compass />EXPLORE</Explore>
          <ToTop>
            <svg width="16" height="24" viewBox="0 0 16 24" fill="none" stroke="#e6e6e6" strokeWidth="1.700"><path d="M8 1.500V23.500M1 8l7-6.500L15 8" /></svg>
          </ToTop>
        </Page>
        <Scrollbar>
          <Chevron up c="#555" w={12} sw={2.6} />
          <Thumb />
          <Chevron c="#555" w={12} sw={2.6} />
        </Scrollbar>
      </Viewport>

      <Taskbar>
        <TaskButton $start><Windows /></TaskButton>
        {PINNED.map((p, i) => (
          <TaskButton key={i} $open={p.open}>{p.icon}</TaskButton>
        ))}
        <TaskButton $current><Firefox /></TaskButton>
        <Tray>
          <TrayIcon $wide><People /></TrayIcon>
          {TRAY.map((icon, i) => (
            <TrayIcon key={i}>{icon}</TrayIcon>
          ))}
          <Clock>18:18<br />29-08-2019</Clock>
          <Notify><NotifyIcon /></Notify>
          <ShowDesktop />
        </Tray>
      </Taskbar>
    </Screen>
  );
}
